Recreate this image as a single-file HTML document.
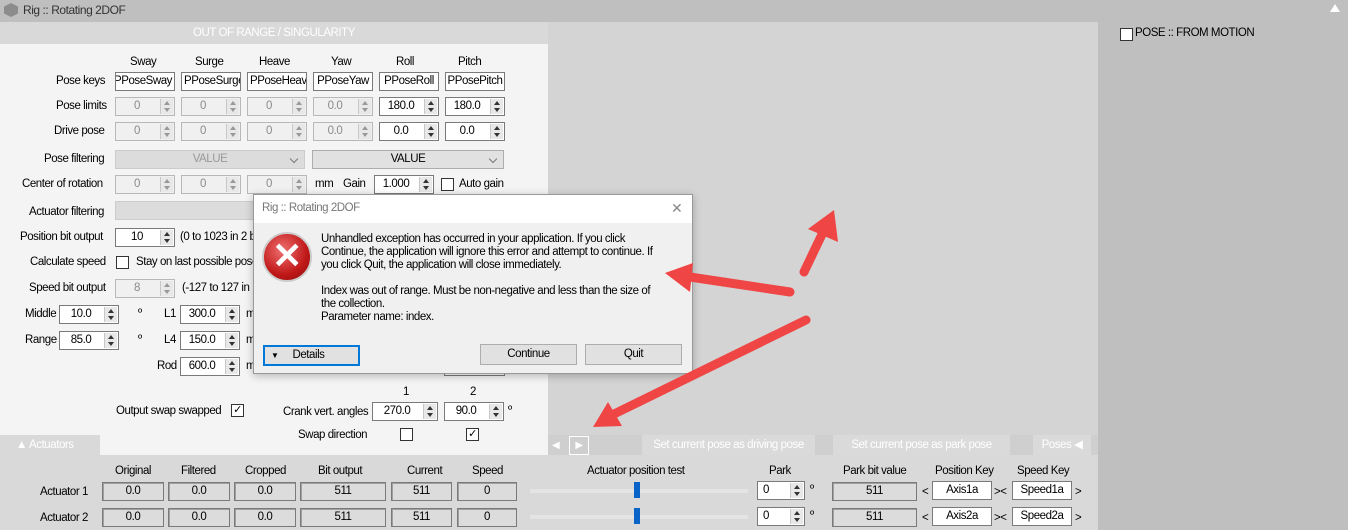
<!DOCTYPE html>
<html><head><style>
*{box-sizing:border-box;margin:0;padding:0}
body{width:1348px;height:530px;position:relative;overflow:hidden;background:#bfbfbf;font-family:"Liberation Sans",sans-serif;font-size:11.5px;color:#000;letter-spacing:-0.45px}
.a{position:absolute;white-space:nowrap}
.sp{position:absolute;height:19px;border:1px solid #7a7a7a;background:#fff;text-align:center;line-height:17px;padding-right:16px}
.sp.d{background:#f0f0f0;color:#8a8a8a;border-color:#b8b8b8}
.sp i{position:absolute;right:1px;top:1px;width:13px;height:15px;border-left:1px solid #c8c8c8;background:#e8e8e8}
.sp i:before{content:"";position:absolute;left:3px;top:2px;border:3px solid transparent;border-bottom:4px solid #333;border-top:0}
.sp i:after{content:"";position:absolute;left:3px;top:9px;border:3px solid transparent;border-top:4px solid #333;border-bottom:0}
.sp.d i:before{border-bottom-color:#999}.sp.d i:after{border-top-color:#999}
.tb{position:absolute;height:19px;border:1px solid #7a7a7a;background:#fff;line-height:17px;text-align:center;overflow:hidden}
.ro{position:absolute;height:19px;border:1px solid #7a7a7a;background:#dcdcdc;line-height:17px;text-align:center;box-shadow:inset 1px 1px 0 #a0a0a0}
.cb{position:absolute;width:13px;height:13px;border:1px solid #333;background:#fff;font-size:11px;line-height:11px;text-align:center}
.btn{position:absolute;height:21px;border:1px solid #adadad;background:#e1e1e1;text-align:center;line-height:19px}
.chev{position:absolute;right:7px;top:5px;width:6px;height:6px;border-right:1px solid #777;border-bottom:1px solid #777;transform:rotate(45deg)}
</style></head><body>
<div class="a" style="left:0;top:0;width:1348px;height:22px;background:#bfbfbf"></div>
<div class="a" style="left:4px;top:3px;width:14px;height:14px;background:#8c8c8c;clip-path:polygon(50% 0,100% 25%,100% 75%,50% 100%,0 75%,0 25%)"></div>
<div class="a" style="left:23px;top:3px;color:#333;font-size:12px">Rig :: Rotating 2DOF</div>
<div class="a" style="left:1330px;top:4px;width:0;height:0;border:5px solid transparent;border-bottom:8px solid #fff;border-top:0"></div>
<div class="a" style="left:548px;top:22px;width:550px;height:413px;background:#d4d4d4"></div>
<div class="a" style="left:548px;top:435px;width:550px;height:20px;background:#cfcfcf"></div>
<div class="cb" style="left:1120px;top:28px"></div>
<div class="a" style="left:1135px;top:27px">POSE :: FROM MOTION</div>
<div class="a" style="left:0;top:22px;width:548px;height:22px;background:#d9d9d9;color:#fff;text-align:center;line-height:22px">OUT OF RANGE / SINGULARITY</div>
<div class="a" style="left:0;top:44px;width:548px;height:391px;background:#f4f4f4"></div>
<div class="a" style="left:100px;top:435px;width:448px;height:20px;background:#f4f4f4"></div>
<div class="a" style="left:0;top:435px;width:100px;height:20px;background:#d9d9d9;color:#fff;line-height:20px;padding-left:16px">▲ Actuators</div>

<div class="a" style="left:130px;top:56px">Sway</div><div class="a" style="left:195px;top:56px">Surge</div><div class="a" style="left:259px;top:56px">Heave</div><div class="a" style="left:331px;top:56px">Yaw</div><div class="a" style="left:396px;top:56px">Roll</div><div class="a" style="left:458px;top:56px">Pitch</div>
<div class="a" style="left:56px;top:75px">Pose keys</div>
<div class="tb" style="left:115px;top:72px;width:60px"><span style="position:absolute;right:2px">PPoseSway</span></div>
<div class="tb" style="left:181px;top:72px;width:60px;text-align:left;padding-left:2px">PPoseSurge</div>
<div class="tb" style="left:247px;top:72px;width:60px;text-align:left;padding-left:2px">PPoseHeave</div>
<div class="tb" style="left:313px;top:72px;width:60px">PPoseYaw</div>
<div class="tb" style="left:379px;top:72px;width:60px">PPoseRoll</div>
<div class="tb" style="left:445px;top:72px;width:60px">PPosePitch</div>

<div class="a" style="left:56px;top:100px">Pose limits</div>
<div class="sp d" style="left:115px;top:97px;width:60px">0<i></i></div><div class="sp d" style="left:181px;top:97px;width:60px">0<i></i></div><div class="sp d" style="left:247px;top:97px;width:60px">0<i></i></div><div class="sp d" style="left:313px;top:97px;width:60px">0.0<i></i></div><div class="sp" style="left:379px;top:97px;width:60px">180.0<i></i></div><div class="sp" style="left:445px;top:97px;width:60px">180.0<i></i></div>
<div class="a" style="left:54px;top:125px">Drive pose</div>
<div class="sp d" style="left:115px;top:122px;width:60px">0<i></i></div><div class="sp d" style="left:181px;top:122px;width:60px">0<i></i></div><div class="sp d" style="left:247px;top:122px;width:60px">0<i></i></div><div class="sp d" style="left:313px;top:122px;width:60px">0.0<i></i></div><div class="sp" style="left:379px;top:122px;width:60px">0.0<i></i></div><div class="sp" style="left:445px;top:122px;width:60px">0.0<i></i></div>
<div class="a" style="left:44px;top:153px">Pose filtering</div>
<div class="a" style="left:115px;top:150px;width:190px;height:19px;border:1px solid #ccc;background:#dcdcdc;color:#999;text-align:center;line-height:17px">VALUE<span class="chev"></span></div>
<div class="a" style="left:312px;top:150px;width:192px;height:19px;border:1px solid #adadad;background:#e1e1e1;text-align:center;line-height:17px">VALUE<span class="chev"></span></div>
<div class="a" style="left:22px;top:178px">Center of rotation</div>
<div class="sp d" style="left:115px;top:175px;width:60px">0<i></i></div><div class="sp d" style="left:181px;top:175px;width:60px">0<i></i></div><div class="sp d" style="left:247px;top:175px;width:60px">0<i></i></div>
<div class="a" style="left:315px;top:178px">mm</div><div class="a" style="left:343px;top:178px">Gain</div>
<div class="sp" style="left:374px;top:175px;width:60px">1.000<i></i></div>
<div class="cb" style="left:441px;top:178px"></div><div class="a" style="left:459px;top:178px">Auto gain</div>
<div class="a" style="left:29px;top:206px">Actuator filtering</div>
<div class="a" style="left:115px;top:201px;width:200px;height:19px;border:1px solid #ccc;background:#dcdcdc"></div>
<div class="a" style="left:20px;top:231px">Position bit output</div>
<div class="sp" style="left:115px;top:228px;width:60px">10<i></i></div><div class="a" style="left:180px;top:231px">(0 to 1023 in 2 b</div>
<div class="a" style="left:30px;top:256px">Calculate speed</div><div class="cb" style="left:116px;top:256px"></div><div class="a" style="left:136px;top:256px">Stay on last possible pose</div>
<div class="a" style="left:29px;top:282px">Speed bit output</div>
<div class="sp d" style="left:115px;top:279px;width:60px">8<i></i></div><div class="a" style="left:182px;top:282px">(-127 to 127 in</div>
<div class="a" style="left:25px;top:308px">Middle</div><div class="sp" style="left:59px;top:305px;width:60px">10.0<i></i></div><div class="a" style="left:138px;top:307px">º</div>
<div class="a" style="left:164px;top:308px">L1</div><div class="sp" style="left:180px;top:305px;width:60px">300.0<i></i></div><div class="a" style="left:246px;top:308px">m</div>
<div class="a" style="left:25px;top:334px">Range</div><div class="sp" style="left:59px;top:331px;width:60px">85.0<i></i></div><div class="a" style="left:138px;top:333px">º</div>
<div class="a" style="left:164px;top:334px">L4</div><div class="sp" style="left:180px;top:331px;width:60px">150.0<i></i></div><div class="a" style="left:246px;top:334px">m</div>
<div class="a" style="left:157px;top:360px">Rod</div><div class="sp" style="left:180px;top:357px;width:60px">600.0<i></i></div><div class="a" style="left:246px;top:360px">m</div>
<div class="a" style="left:444px;top:357px;width:61px;height:19px;border:1px solid #7a7a7a;background:#fff"></div>
<div class="a" style="left:116px;top:405px">Output swap swapped</div><div class="cb" style="left:231px;top:404px">✓</div>
<div class="a" style="left:403px;top:386px">1</div><div class="a" style="left:470px;top:386px">2</div>
<div class="a" style="left:283px;top:406px">Crank vert. angles</div>
<div class="sp" style="left:372px;top:402px;width:66px">270.0<i></i></div><div class="sp" style="left:444px;top:402px;width:60px">90.0<i></i></div><div class="a" style="left:508px;top:404px">º</div>
<div class="a" style="left:298px;top:429px">Swap direction</div><div class="cb" style="left:400px;top:428px"></div><div class="cb" style="left:466px;top:428px">✓</div>

<div class="a" style="left:552px;top:440px;color:#fff;font-size:10px">◀</div>
<div class="a" style="left:569px;top:436px;width:20px;height:19px;border:1px solid #fff;color:#fff;font-size:10px;text-align:center;line-height:17px">▶</div>
<div class="a" style="left:642px;top:435px;width:173px;height:20px;background:#dadada;color:#fff;text-align:center;line-height:20px">Set current pose as driving pose</div>
<div class="a" style="left:833px;top:435px;width:177px;height:20px;background:#dadada;color:#fff;text-align:center;line-height:20px">Set current pose as park pose</div>
<div class="a" style="left:1033px;top:435px;width:58px;height:20px;background:#dadada;color:#fff;text-align:center;line-height:20px">Poses ◀</div>

<div class="a" style="left:0;top:455px;width:1098px;height:75px;background:#d9d9d9"></div>
<div class="a" style="left:115px;top:465px">Original</div><div class="a" style="left:181px;top:465px">Filtered</div><div class="a" style="left:245px;top:465px">Cropped</div><div class="a" style="left:318px;top:465px">Bit output</div><div class="a" style="left:407px;top:465px">Current</div><div class="a" style="left:472px;top:465px">Speed</div>
<div class="a" style="left:587px;top:465px">Actuator position test</div><div class="a" style="left:769px;top:465px">Park</div><div class="a" style="left:843px;top:465px">Park bit value</div><div class="a" style="left:935px;top:465px">Position Key</div><div class="a" style="left:1017px;top:465px">Speed Key</div>

<div class="a" style="left:40px;top:486px">Actuator 1</div>
<div class="ro" style="left:102px;top:482px;width:62px">0.0</div><div class="ro" style="left:168px;top:482px;width:62px">0.0</div><div class="ro" style="left:234px;top:482px;width:62px">0.0</div><div class="ro" style="left:300px;top:482px;width:86px">511</div><div class="ro" style="left:391px;top:482px;width:61px">511</div><div class="ro" style="left:457px;top:482px;width:60px">0</div>
<div class="a" style="left:530px;top:489px;width:218px;height:4px;background:#e4e4e4"></div><div class="a" style="left:634px;top:482px;width:6px;height:16px;background:#0a64c8"></div>
<div class="sp" style="left:757px;top:481px;width:48px;text-align:left;padding-left:5px">0<i></i></div><div class="a" style="left:810px;top:483px">º</div>
<div class="ro" style="left:832px;top:482px;width:85px">511</div><div class="a" style="left:922px;top:486px">&lt;</div>
<div class="tb" style="left:932px;top:481px;width:60px">Axis1a</div><div class="a" style="left:994px;top:486px">&gt;&lt;</div>
<div class="tb" style="left:1012px;top:481px;width:60px">Speed1a</div><div class="a" style="left:1075px;top:486px">&gt;</div>

<div class="a" style="left:40px;top:512px">Actuator 2</div>
<div class="ro" style="left:102px;top:508px;width:62px">0.0</div><div class="ro" style="left:168px;top:508px;width:62px">0.0</div><div class="ro" style="left:234px;top:508px;width:62px">0.0</div><div class="ro" style="left:300px;top:508px;width:86px">511</div><div class="ro" style="left:391px;top:508px;width:61px">511</div><div class="ro" style="left:457px;top:508px;width:60px">0</div>
<div class="a" style="left:530px;top:515px;width:218px;height:4px;background:#e4e4e4"></div><div class="a" style="left:634px;top:508px;width:6px;height:16px;background:#0a64c8"></div>
<div class="sp" style="left:757px;top:507px;width:48px;text-align:left;padding-left:5px">0<i></i></div><div class="a" style="left:810px;top:509px">º</div>
<div class="ro" style="left:832px;top:508px;width:85px">511</div><div class="a" style="left:922px;top:512px">&lt;</div>
<div class="tb" style="left:932px;top:507px;width:60px">Axis2a</div><div class="a" style="left:994px;top:512px">&gt;&lt;</div>
<div class="tb" style="left:1012px;top:507px;width:60px">Speed2a</div><div class="a" style="left:1075px;top:512px">&gt;</div>

<div class="a" style="left:253px;top:194px;width:440px;height:180px;background:#f0f0f0;border:1px solid #999;box-shadow:0 2px 8px rgba(0,0,0,.25)"></div>
<div class="a" style="left:254px;top:195px;width:438px;height:28px;background:#fff"></div>
<div class="a" style="left:262px;top:202px;color:#777">Rig :: Rotating 2DOF</div>
<div class="a" style="left:671px;top:200px;color:#888;font-size:14px">✕</div>
<div class="a" style="left:262px;top:232px;width:50px;height:50px;border-radius:50%;background:radial-gradient(circle at 40% 35%,#f07070,#c01818 60%,#8a0c0c);border:2px solid #ccc"></div>
<div class="a" style="left:262px;top:229px;width:50px;height:50px;color:#fff;font-size:36px;font-weight:bold;text-align:center;line-height:54px">✕</div>
<div class="a" style="left:321px;top:233px;line-height:13px">Unhandled exception has occurred in your application. If you click<br>Continue, the application will ignore this error and attempt to continue. If<br>you click Quit, the application will close immediately.<br><br>Index was out of range. Must be non-negative and less than the size of<br>the collection.<br>Parameter name: index.</div>
<div class="btn" style="left:263px;top:345px;width:97px;border:2px solid #0078d7;text-align:left;padding-left:6px;line-height:17px"><span style="font-size:8px">▼</span><span style="margin-left:14px">Details</span></div>
<div class="btn" style="left:480px;top:344px;width:97px">Continue</div>
<div class="btn" style="left:585px;top:344px;width:97px">Quit</div>

<svg class="a" style="left:0;top:0" width="1348" height="530">
<g stroke="#f04545" stroke-width="9" stroke-linecap="round" fill="#f04545">
<line x1="804" y1="272" x2="826" y2="226"/>
<line x1="790" y1="292" x2="690" y2="277"/>
<line x1="806" y1="320" x2="612" y2="415"/>
</g>
<g fill="#f04545">
<polygon points="834,210 838,242 808,229"/>
<polygon points="665,273 693,263 690,292"/>
<polygon points="593,427 608,402 622,426"/>
</g>
</svg>
</body></html>
